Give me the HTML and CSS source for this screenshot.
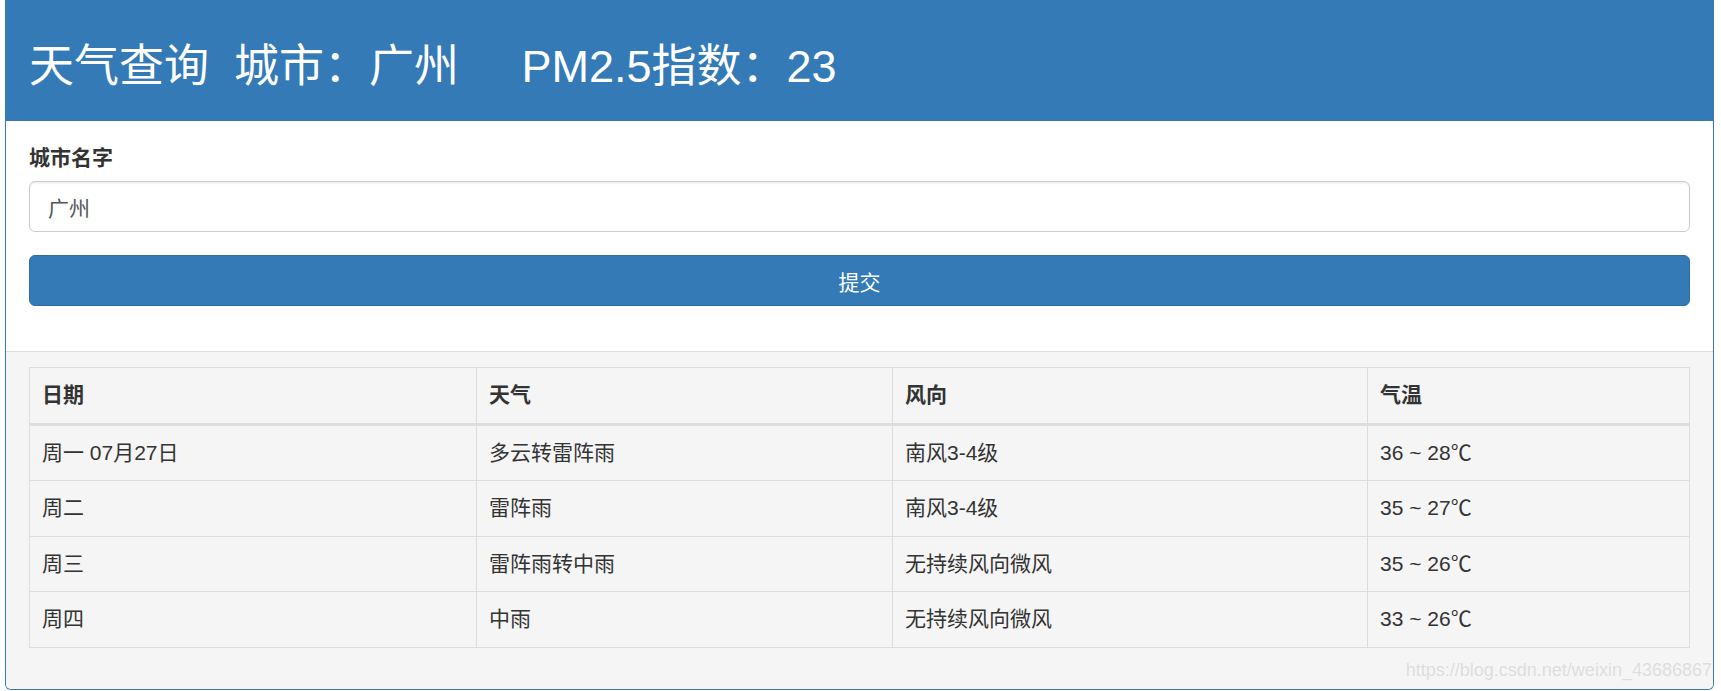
FILE: index.html
```html
<!DOCTYPE html>
<html lang="zh-CN">
<head>
    <meta charset="UTF-8">
    <meta name="viewport" content="width=device-width, initial-scale=1.0">
    <title>天气查询</title>
    <link rel="stylesheet" href="styles.css">
</head>
<body>

<div class="panel">
    <!-- 标题栏 -->
    <div class="panel-heading">
        <h2>天气查询&nbsp;&nbsp;城市：广州&nbsp;&nbsp;&nbsp;&nbsp;&nbsp;PM2.5指数：23</h2>
    </div>

    <!-- 查询表单 -->
    <div class="panel-body">
        <form class="query-form" onsubmit="return false;">
            <div class="form-group">
                <label for="cityName">城市名字</label>
                <input type="text" id="cityName" class="form-control" value="广州">
            </div>
            <div class="form-group">
                <button type="submit" class="btn-submit">提交</button>
            </div>
        </form>
    </div>

    <!-- 天气结果 -->
    <div class="panel-footer">
        <table class="weather-table">
            <thead>
                <tr>
                    <th class="col-date">日期</th>
                    <th class="col-weather">天气</th>
                    <th class="col-wind">风向</th>
                    <th>气温</th>
                </tr>
            </thead>
            <tbody>
                <tr>
                    <td>周一 07月27日</td>
                    <td>多云转雷阵雨</td>
                    <td>南风3-4级</td>
                    <td>36 ~ 28℃</td>
                </tr>
                <tr>
                    <td>周二</td>
                    <td>雷阵雨</td>
                    <td>南风3-4级</td>
                    <td>35 ~ 27℃</td>
                </tr>
                <tr>
                    <td>周三</td>
                    <td>雷阵雨转中雨</td>
                    <td>无持续风向微风</td>
                    <td>35 ~ 26℃</td>
                </tr>
                <tr>
                    <td>周四</td>
                    <td>中雨</td>
                    <td>无持续风向微风</td>
                    <td>33 ~ 26℃</td>
                </tr>
            </tbody>
        </table>
    </div>

    <div class="watermark">https://blog.csdn.net/weixin_43686867</div>
</div>

</body>
</html>
```

FILE: styles.css
```css
body {
    margin: 0;
    background-color: #ffffff;
    font-family: "Liberation Sans", "Noto Sans CJK SC", sans-serif;
    font-size: 21px;
    line-height: 30px;
    color: #333;
}

* {
    box-sizing: border-box;
}

.panel {
    position: relative;
    margin-left: 5px;
    width: 1709px;
    height: 690px;
    border: 1px solid #337ab7;
    border-top: none;
    border-radius: 0 0 6px 6px;
    background-color: #ffffff;
}

.panel-heading {
    height: 121px;
    padding: 42px 23px 0;
    background-color: #337ab7;
    color: #ffffff;
}

.panel-heading h2 {
    margin: 0;
    font-size: 45px;
    line-height: 49.5px;
    font-weight: 400;
    white-space: nowrap;
}

.panel-body {
    padding: 22px 23px;
}

.form-group {
    margin-bottom: 23px;
}

label {
    display: block;
    margin-bottom: 8px;
    font-weight: 700;
    font-size: 21px;
    line-height: 30px;
}

.form-control {
    display: block;
    width: 100%;
    height: 51px;
    padding: 0 18px;
    font-family: inherit;
    font-size: 21px;
    color: #555;
    background-color: #fff;
    border: 1px solid #ccc;
    border-radius: 6px;
    box-shadow: inset 0 1.5px 1.5px rgba(0, 0, 0, 0.075);
    outline: none;
}

.btn-submit {
    display: block;
    width: 100%;
    height: 51px;
    font-family: inherit;
    font-size: 21px;
    color: #ffffff;
    background-color: #337ab7;
    border: 1px solid #2e6da4;
    border-radius: 6px;
    cursor: pointer;
}

.btn-submit:hover {
    background-color: #286090;
}

.panel-footer {
    padding: 15px 23px;
    background-color: #f5f5f5;
    border-top: 1px solid #ddd;
    border-radius: 0 0 5px 5px;
    height: 338px;
}

.weather-table {
    width: 100%;
    border-collapse: collapse;
    table-layout: fixed;
    border: 1px solid #ddd;
}

.weather-table th,
.weather-table td {
    padding: 12px 12px 12.5px;
    line-height: 30px;
    text-align: left;
    border: 1px solid #ddd;
    white-space: nowrap;
}

.weather-table th {
    font-weight: 700;
    border-bottom: 3px solid #ddd;
}

.col-date {
    width: 447px;
}

.col-weather {
    width: 416px;
}

.col-wind {
    width: 475px;
}

/* CSDN 水印 */
.watermark {
    position: absolute;
    right: 1px;
    bottom: 9px;
    font-size: 18px;
    line-height: 20px;
    color: #dcdcdc;
    text-shadow: 0 0 1px #ffffff;
    pointer-events: none;
}
```
